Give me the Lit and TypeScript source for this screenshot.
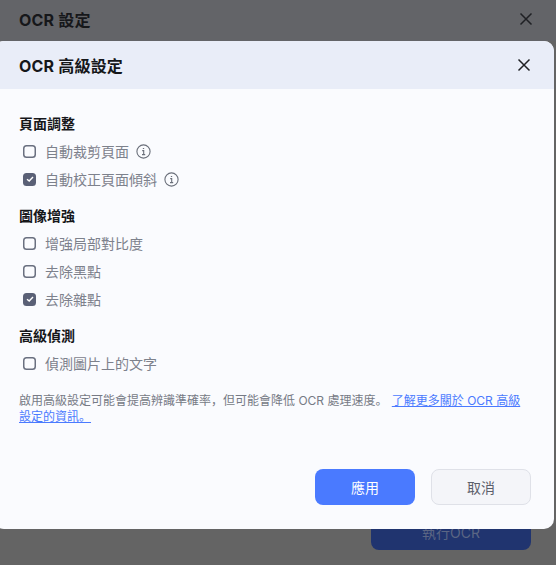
import { LitElement, html, css, svg } from "lit";
import { customElement } from "lit/decorators.js";

const closeIcon = html`<svg class="close" width="16" height="16" viewBox="0 0 16 16" fill="none" stroke="#1f2024" stroke-width="1.5"><path d="M2.5 2.5 13.5 13.5M13.5 2.5 2.5 13.5"/></svg>`;
const infoIcon = html`<svg class="info" width="15" height="15" viewBox="0 0 15 15" fill="none" stroke="#6a6f7a" stroke-width="1.1"><circle cx="7.5" cy="7.5" r="6.6"/><path d="M6.2 6.6H7.7V10.6M6 10.6H9.2"/><path d="M7.5 4V5.1" stroke-width="1.3"/></svg>`;

type Opt = { label: string; checked?: boolean; info?: boolean };
const sections: { title: string; options: Opt[] }[] = [
  { title: "頁面調整", options: [{ label: "自動裁剪頁面", info: true }, { label: "自動校正頁面傾斜", checked: true, info: true }] },
  { title: "圖像增強", options: [{ label: "增強局部對比度" }, { label: "去除黑點" }, { label: "去除雜點", checked: true }] },
  { title: "高級偵測", options: [{ label: "偵測圖片上的文字" }] },
];

@customElement("app-root")
export class AppRoot extends LitElement {
  static styles = css`
    :host {
      display: block;
      position: relative;
      width: 556px;
      height: 565px;
      overflow: hidden;
      background: #646464;
      font-family: Inter, "Noto Sans CJK SC", sans-serif;
    }
    .base { display: flex; flex-direction: column; height: 100%; box-sizing: border-box; }
    .base-head {
      display: flex; align-items: center; justify-content: space-between;
      height: 41px; padding: 0 22px 3px 19px; box-sizing: border-box;
      background: #636468; font-size: 16px; font-weight: 700; color: #16171a;
    }
    .base-foot { margin-top: auto; display: flex; justify-content: flex-end; padding: 0 25px 15px 0; }
    .run {
      width: 160px; height: 36px; border-radius: 8px; box-sizing: border-box;
      background: #20346f; color: #5b6684; font-size: 14px;
      display: flex; align-items: center; justify-content: center;
    }
    .modal {
      position: absolute; left: -6px; top: 41px; width: 560px; height: 488px;
      background: #fafbfe; border-radius: 10px; overflow: hidden;
      display: flex; flex-direction: column;
    }
    .head {
      display: flex; align-items: center; justify-content: space-between;
      height: 48px; flex: none; box-sizing: border-box; padding: 0 22px 0 25px;
      background: #e9edf8; font-size: 16px; font-weight: 700; color: #16171a;
    }
    .title { letter-spacing: 0.2px; }
    .close { display: block; }
    .body { flex: 1; padding: 24px 25px 0; }
    .sec-title { font-size: 14px; font-weight: 700; color: #16171a; line-height: 22px; margin-bottom: 2px; }
    .section + .section { margin-top: 12px; }
    .opt {
      display: flex; align-items: center; height: 28px;
      font-size: 14px; color: #7d818c;
    }
    .box {
      width: 13px; height: 13px; margin-left: 4px; margin-right: 9px; flex: none;
      box-shadow: inset 0 0 0 1.5px #6a7080; border-radius: 3.5px;
      display: flex; align-items: center; justify-content: center;
    }
    .box.on { background: #5a6076; box-shadow: none; }
    .info { margin-left: 6.5px; flex: none; }
    .note { margin: 16px 0 0; font-size: 12px; line-height: 16px; color: #767a85; width: 510px; }
    .note a { color: #4a7aff; text-decoration: underline; margin-left: 1px; }
    .foot { display: flex; justify-content: flex-end; gap: 16px; padding: 0 23px 24px 0; }
    .btn {
      width: 100px; height: 36px; border-radius: 8px; box-sizing: border-box;
      display: flex; align-items: center; justify-content: center; font-size: 14px;
    }
    .primary { background: #4a7aff; color: #fff; }
    .ghost { background: #f4f5f9; border: 1px solid #dfe1e8; color: #5c606b; }
  `;

  render() {
    return html`
      <div class="base">
        <div class="base-head"><span class="title">OCR 設定</span>${closeIcon}</div>
        <div class="base-foot"><div class="run">執行OCR</div></div>
      </div>
      <div class="modal">
        <div class="head"><span class="title">OCR 高級設定</span>${closeIcon}</div>
        <div class="body">
          ${sections.map(
            (s) => html`<div class="section">
              <div class="sec-title">${s.title}</div>
              ${s.options.map(
                (o) => html`<div class="opt">
                  <span class="box ${o.checked ? "on" : ""}">
                    ${o.checked
                      ? html`<svg width="8" height="8" viewBox="0 0 8 8" fill="none" stroke="#fff" stroke-width="1.4">${svg`<path d="M1 4.2 3.2 6 7 2"/>`}</svg>`
                      : ""}
                  </span>
                  <span>${o.label}</span>
                  ${o.info ? infoIcon : ""}
                </div>`
              )}
            </div>`
          )}
          <p class="note">啟用高級設定可能會提高辨識準確率，但可能會降低 OCR 處理速度。 <a href="#">了解更多關於 OCR 高級設定的資訊。</a></p>
        </div>
        <div class="foot">
          <div class="btn primary">應用</div>
          <div class="btn ghost">取消</div>
        </div>
      </div>
    `;
  }
}
